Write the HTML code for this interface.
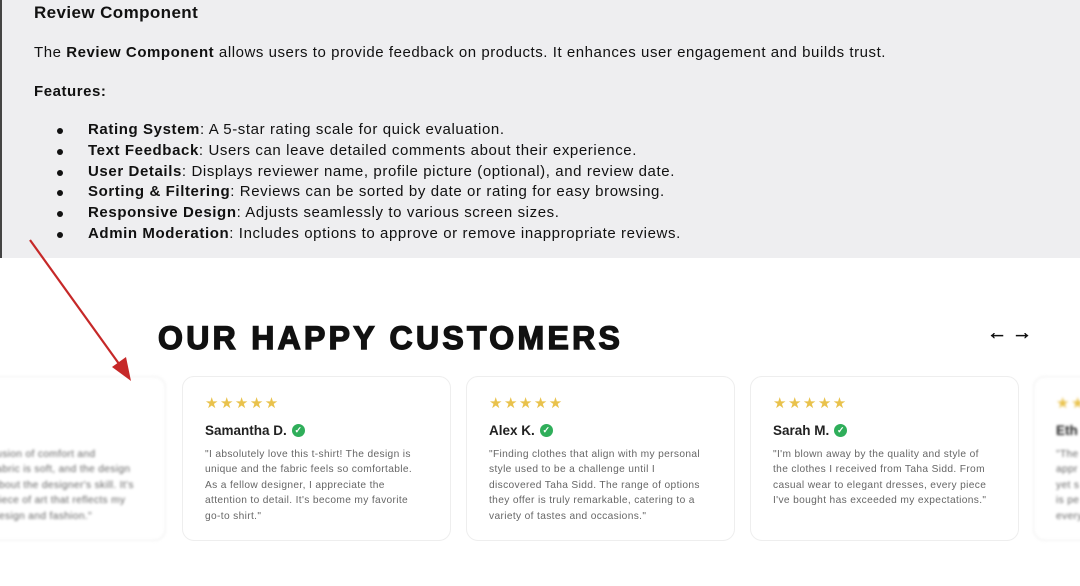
<!DOCTYPE html>
<html><head><meta charset="utf-8"><style>
*{margin:0;padding:0;box-sizing:border-box}
html,body{width:1080px;height:586px;overflow:hidden}
body{background:#fff;font-family:"Liberation Sans",sans-serif;position:relative}
.top{position:absolute;left:0;top:0;width:1080px;height:258px;background:#eeeef0;border-left:2px solid #444;color:#111}
.top h1{position:absolute;left:32px;top:3px;font-size:17px;font-weight:bold;letter-spacing:0.4px}
.top p{position:absolute;left:32px;font-size:15px;letter-spacing:0.55px;white-space:nowrap}
ul{position:absolute;left:55px;top:120px;list-style:none;font-size:15px;letter-spacing:0.6px;white-space:nowrap}
ul li{height:20.8px;line-height:20.8px;position:relative;padding-left:31px}
ul li:before{content:"";position:absolute;left:0;top:8px;width:6px;height:6px;border-radius:50%;background:#111}
.h2{position:absolute;left:158px;top:320px;font-size:32px;font-weight:900;letter-spacing:3.3px;color:#111;-webkit-text-stroke:1.4px #111;white-space:nowrap}
.arrows{position:absolute;left:987px;top:322px;font-size:20px;font-weight:bold;color:#111;letter-spacing:5px;-webkit-text-stroke:0.6px #111}
.card{position:absolute;top:376px;width:269px;height:165px;border:1px solid #eee;border-radius:12px;background:#fff;overflow:hidden}
.stars{position:absolute;left:22px;top:17px;color:#e9c24c;font-size:15px;letter-spacing:1.5px}
.name{position:absolute;left:22px;top:45px;font-size:13.5px;font-weight:bold;color:#222;white-space:nowrap;display:flex;align-items:center;height:16px}
.chk{display:inline-block;width:13px;height:13px;border-radius:50%;background:#2fae5a;color:#fff;font-size:9px;text-align:center;line-height:13px;margin-left:5px}
.txt{position:absolute;left:22px;top:70px;font-size:10.2px;letter-spacing:0.35px;line-height:15.4px;color:#666;white-space:nowrap}
.blur{filter:blur(1.2px)}
</style></head><body>
<div class="top">
<h1>Review Component</h1>
<p style="top:44px">The <b>Review Component</b> allows users to provide feedback on products. It enhances user engagement and builds trust.</p>
<p style="top:83px"><b>Features:</b></p>
<ul>
<li><b>Rating System</b>: A 5-star rating scale for quick evaluation.</li>
<li><b>Text Feedback</b>: Users can leave detailed comments about their experience.</li>
<li><b>User Details</b>: Displays reviewer name, profile picture (optional), and review date.</li>
<li><b>Sorting &amp; Filtering</b>: Reviews can be sorted by date or rating for easy browsing.</li>
<li><b>Responsive Design</b>: Adjusts seamlessly to various screen sizes.</li>
<li><b>Admin Moderation</b>: Includes options to approve or remove inappropriate reviews.</li>
</ul>
</div>
<div class="h2">OUR HAPPY CUSTOMERS</div>
<div class="arrows">←→</div>
<div class="card blur" style="left:-103px"><div class="txt" style="left:95px;top:70px">fusion of comfort and<br>fabric is soft, and the design<br>about the designer's skill. It's<br>piece of art that reflects my<br>design and fashion."</div></div>
<div class="card" style="left:182px"><div class="stars">★★★★★</div><div class="name">Samantha D.<span class="chk">✓</span></div><div class="txt">"I absolutely love this t-shirt! The design is<br>unique and the fabric feels so comfortable.<br>As a fellow designer, I appreciate the<br>attention to detail. It's become my favorite<br>go-to shirt."</div></div>
<div class="card" style="left:466px"><div class="stars">★★★★★</div><div class="name">Alex K.<span class="chk">✓</span></div><div class="txt">"Finding clothes that align with my personal<br>style used to be a challenge until I<br>discovered Taha Sidd. The range of options<br>they offer is truly remarkable, catering to a<br>variety of tastes and occasions."</div></div>
<div class="card" style="left:750px"><div class="stars">★★★★★</div><div class="name">Sarah M.<span class="chk">✓</span></div><div class="txt">"I'm blown away by the quality and style of<br>the clothes I received from Taha Sidd. From<br>casual wear to elegant dresses, every piece<br>I've bought has exceeded my expectations."</div></div>
<div class="card blur" style="left:1033px"><div class="stars">★★★★★</div><div class="name">Eth</div><div class="txt">"The<br>appr<br>yet s<br>is pe<br>every</div></div>
<svg style="position:absolute;left:0;top:0" width="1080" height="586"><line x1="30" y1="240" x2="122" y2="368" stroke="#c62828" stroke-width="2.2"/><polygon points="131,381 112,367 126,357" fill="#c62828"/></svg>
</body></html>
